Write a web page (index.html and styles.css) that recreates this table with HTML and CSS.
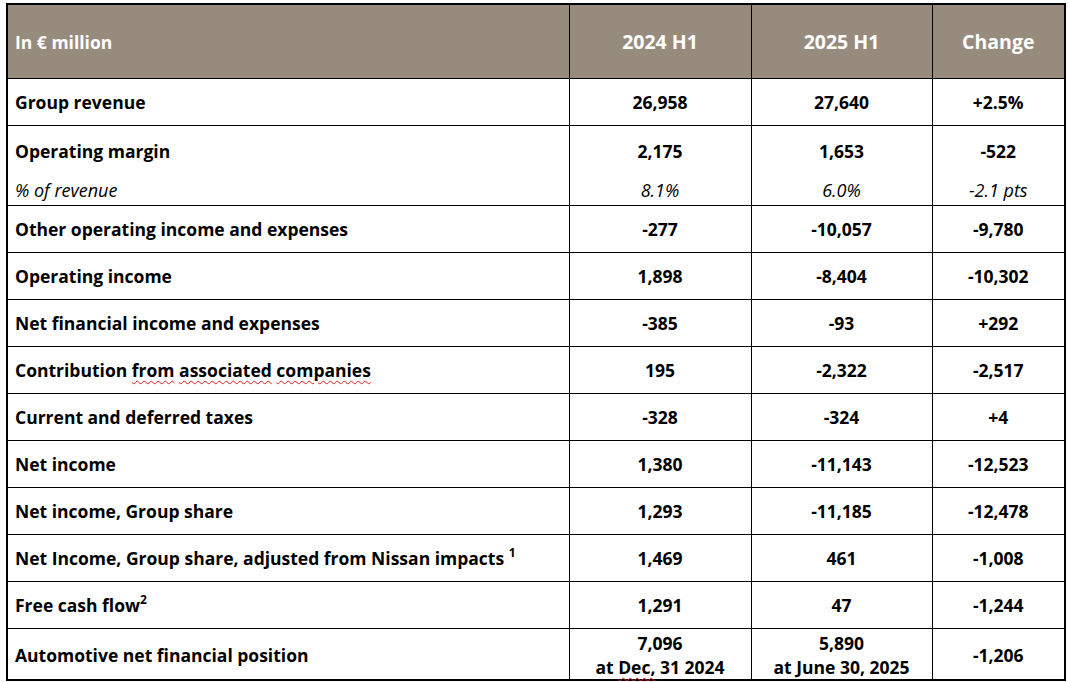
FILE: index.html
```html
<!DOCTYPE html>
<html>
<head>
<meta charset="utf-8">
<link rel="stylesheet" href="styles.css">
</head>
<body>
<table class="results">
  <colgroup>
    <col class="c-label">
    <col class="c-num">
    <col class="c-num2">
    <col class="c-chg">
  </colgroup>
  <thead>
    <tr class="head">
      <th class="label">In € million</th>
      <th>2024 H1</th>
      <th>2025 H1</th>
      <th>Change</th>
    </tr>
  </thead>
  <tbody>
    <tr><td class="label">Group revenue</td><td>26,958</td><td>27,640</td><td>+2.5%</td></tr>
    <tr class="top-half"><td class="label">Operating margin</td><td>2,175</td><td>1,653</td><td>-522</td></tr>
    <tr class="sub"><td class="label">% of revenue</td><td>8.1%</td><td>6.0%</td><td>-2.1 pts</td></tr>
    <tr><td class="label">Other operating income and expenses</td><td>-277</td><td>-10,057</td><td>-9,780</td></tr>
    <tr><td class="label">Operating income</td><td>1,898</td><td>-8,404</td><td>-10,302</td></tr>
    <tr><td class="label">Net financial income and expenses</td><td>-385</td><td>-93</td><td>+292</td></tr>
    <tr><td class="label">Contribution <span class="spell">from</span> <span class="spell">associated</span> <span class="spell">companies</span></td><td>195</td><td>-2,322</td><td>-2,517</td></tr>
    <tr><td class="label">Current and deferred taxes</td><td>-328</td><td>-324</td><td>+4</td></tr>
    <tr><td class="label">Net income</td><td>1,380</td><td>-11,143</td><td>-12,523</td></tr>
    <tr><td class="label">Net income, Group share</td><td>1,293</td><td>-11,185</td><td>-12,478</td></tr>
    <tr><td class="label">Net Income, Group share, adjusted from Nissan impacts <sup>1</sup></td><td>1,469</td><td>461</td><td>-1,008</td></tr>
    <tr><td class="label">Free cash flow<sup>2</sup></td><td>1,291</td><td>47</td><td>-1,244</td></tr>
    <tr class="last"><td class="label">Automotive net financial position</td><td>7,096<br>at <span class="spell">Dec,</span> 31 2024</td><td>5,890<br>at June 30, 2025</td><td>-1,206</td></tr>
  </tbody>
</table>
</body>
</html>
```

FILE: styles.css
```css
html, body {
  margin: 0;
  padding: 0;
  background: #ffffff;
}

body {
  padding: 3px 0 0 6px;
  font-family: "Open Sans", Lato, "Liberation Sans", sans-serif;
  color: #000;
}

.results {
  border-collapse: collapse;
  table-layout: fixed;
  width: 1058px;
  border: 2px solid #000;
}

.c-label { width: 562px; }
.c-num { width: 182px; }
.c-num2 { width: 181px; }
.c-chg { width: 133px; }

.results th,
.results td {
  border: 1px solid #000;
  text-align: center;
  vertical-align: middle;
  font-weight: 700;
  font-size: 17.5px;
  padding: 0 6px;
  height: 46px;
  line-height: 24px;
}

.results .label {
  text-align: left;
  padding-left: 7px;
}

.head th {
  background: #978b7d;
  color: #ffffff;
  height: 73px;
  font-size: 19.5px;
  border-color: #000;
}

.head th.label {
  font-size: 17.5px;
}

.top-half td {
  border-bottom: none;
  height: 37px;
  padding-top: 6px;
  padding-bottom: 0;
}

.sub td {
  border-top: none;
  height: 30px;
  padding-top: 6px;
  padding-bottom: 0;
  font-weight: 400;
  font-style: italic;
  font-size: 18px;
}

.last td {
  height: 49px;
  padding-top: 1px;
}

sup {
  font-size: 12px;
  line-height: 0;
  vertical-align: 8px;
}

.spell {
  text-decoration: underline wavy #e02020;
  text-decoration-thickness: 1px;
  text-underline-offset: 3px;
}
```
